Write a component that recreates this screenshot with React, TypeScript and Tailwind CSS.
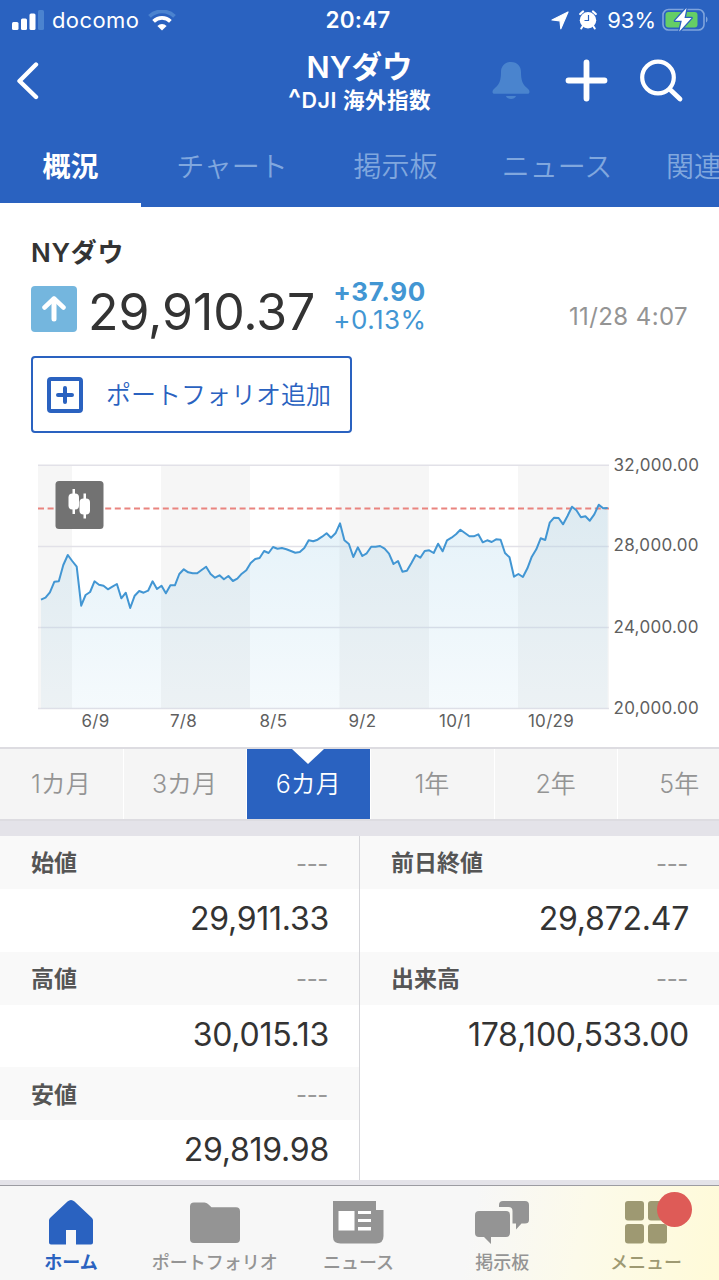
import clsx from "clsx";

// Closing levels, one per trading day, in thirds of a pixel from the top of the chart box.
const LEVELS = [
  449, 443, 427, 395, 394, 345, 315, 333, 350, 467, 435, 426, 394, 404, 407, 418, 410, 402, 445, 428,
  474, 437, 423, 428, 422, 394, 417, 407, 430, 406, 406, 372, 358, 367, 370, 370, 360, 350, 372, 383,
  376, 388, 378, 393, 386, 371, 361, 339, 327, 324, 303, 309, 291, 296, 294, 298, 303, 308, 306, 294,
  271, 274, 269, 260, 250, 263, 250, 220, 271, 282, 321, 292, 318, 310, 290, 290, 288, 296, 311, 342,
  333, 365, 362, 340, 315, 323, 303, 301, 309, 281, 304, 271, 263, 253, 239, 249, 259, 259, 253, 277,
  271, 276, 268, 269, 309, 322, 380, 372, 381, 355, 320, 298, 265, 270, 218, 203, 204, 223, 198, 170,
  181, 202, 199, 212, 193, 164, 175, 174,
];

const START_X = 41;
const STEP = 4.462;
const line = LEVELS.map((y, i) => `${(START_X + i * STEP).toFixed(1)},${(y / 3).toFixed(1)}`).join(" ");
const endX = START_X + (LEVELS.length - 1) * STEP;

const BANDS = [
  { x: 38, w: 34 },
  { x: 161, w: 89 },
  { x: 339.5, w: 89.5 },
  { x: 518, w: 91 },
];

const X_LABELS = [
  { text: "6/9", x: 95.5 },
  { text: "7/8", x: 183.5 },
  { text: "8/5", x: 273.5 },
  { text: "9/2", x: 362.5 },
  { text: "10/1", x: 455 },
  { text: "10/29", x: 551 },
];

const Y_LABELS = [
  { text: "32,000.00", y: 20.5 },
  { text: "28,000.00", y: 101 },
  { text: "24,000.00", y: 182.5 },
  { text: "20,000.00", y: 264 },
];

const TABS = [
  { label: "概況", width: "w-[141px]", active: true },
  { label: "チャート", width: "w-[182px]" },
  { label: "掲示板", width: "w-[145px]" },
  { label: "ニュース", width: "w-[178px]" },
  { label: "関連", width: "w-[96px]" },
];

const RANGES = ["1カ月", "3カ月", "6カ月", "1年", "2年", "5年"];

const LEFT_STATS = [
  { label: "始値", value: "29,911.33" },
  { label: "高値", value: "30,015.13" },
  { label: "安値", value: "29,819.98" },
];

const RIGHT_STATS = [
  { label: "前日終値", value: "29,872.47" },
  { label: "出来高", value: "178,100,533.00" },
];

function StatusBar() {
  return (
    <div className="grid h-10 grid-cols-3 items-center pl-3 pr-[11px]">
      <div className="flex items-center">
        <svg width="32" height="20" viewBox="0 0 32 20" fill="#fff">
          <rect x="0" y="12" width="6.5" height="8" rx="1.5" />
          <rect x="9" y="8.5" width="6" height="11.5" rx="1.5" />
          <rect x="17.5" y="3.5" width="6" height="16.5" rx="1.5" />
          <rect x="26" y="0" width="6" height="20" rx="1.5" fill="#4b83cf" />
        </svg>
        <span className="ml-2 text-[22px] tracking-[0.4px]">docomo</span>
        <svg className="ml-[9px]" width="28" height="21" viewBox="0 0 28 21" fill="none">
          <path d="M1.5 6.4a18 18 0 0 1 25 0" stroke="#4b83cf" strokeWidth="3.8" />
          <path d="M5.6 11.4a12 12 0 0 1 16.8 0" stroke="#fff" strokeWidth="3.8" />
          <path d="M14 20.6l-4.6-4.7a6.6 6.6 0 0 1 9.2 0z" fill="#fff" />
        </svg>
      </div>
      <div className="pr-1 text-center text-[22.5px] font-semibold tracking-[0.2px]">20:47</div>
      <div className="flex items-center justify-end">
        <svg width="18" height="19" viewBox="0 0 18 19" fill="#fff" stroke="#fff" strokeWidth="1.2" strokeLinejoin="round">
          <path d="M17 1L9.800 17.800 9 9.800 1 9z" />
        </svg>
        <svg className="ml-2.5" width="18" height="20" viewBox="0 0 18 20">
          <circle cx="9" cy="10.200" r="8.200" fill="#fff" />
          <path d="M1.200 4L4 1.500M16.800 4L14 1.500" stroke="#fff" strokeWidth="2.200" strokeLinecap="round" />
          <path d="M3.500 16.500L2.200 18.500M14.500 16.500l1.300 2" stroke="#fff" strokeWidth="2" strokeLinecap="round" />
          <path d="M9.500 5V10.500H5.500" fill="none" stroke="#2a62c0" strokeWidth="1.200" />
        </svg>
        <span className="ml-[10px] text-[22px]">93%</span>
        <svg className="ml-1.5" width="46" height="24" viewBox="0 0 46 24">
          <rect x="1" y="1.500" width="41" height="20.500" rx="5.500" fill="none" stroke="#7fa4dc" strokeWidth="1.600" />
          <path d="M44 8.500c2 .8 2 5.200 0 6z" fill="#7fa4dc" />
          <rect x="3.500" y="4" width="32" height="15.500" rx="3" fill="#65ce66" />
          <path
            d="M24.500 0L13 12.800h6.800L17.300 23.500 29.500 10h-7z"
            fill="#fff"
            stroke="#2a62c0"
            strokeWidth="2.600"
            strokeLinejoin="round"
            paintOrder="stroke"
          />
        </svg>
      </div>
    </div>
  );
}

function Header() {
  return (
    <header className="flex h-[207px] flex-col bg-[#2a62c0] text-white">
      <StatusBar />
      <div className="grid h-[84px] grid-cols-[1fr_auto_1fr] pt-1.5">
        <svg className="ml-[17px] mt-[16px]" width="22" height="38" viewBox="0 0 22 38" fill="none">
          <path d="M19 2.500L2.500 19 19 35" stroke="#fff" strokeWidth="4.400" strokeLinecap="round" strokeLinejoin="round" />
        </svg>
        <div className="text-center font-semibold">
          <div className="text-[30.5px] leading-[41px]">NYダウ</div>
          <div className="text-[21.500px] leading-[27px] tracking-[0.5px]">
            <span className="text-[27px] leading-[20px]">^</span>DJI 海外指数
          </div>
        </div>
        <div className="flex items-start justify-end pr-[35px]">
          <svg className="mt-[15px]" width="38" height="40" viewBox="0 0 38 40" fill="#4a84ce">
            <path d="M19 1C12.500 1 9 5.500 9 11c0 8-1.500 12-5.500 15.500C1.500 28.200.5 29 .5 31c0 1.300 1 1.800 2.500 1.800h32c1.500 0 2.500-.5 2.500-1.800 0-2-1-2.800-3-4.500C30.500 23 29 19 29 11 29 5.500 25.500 1 19 1z" />
            <path d="M14 35h10c-1.200 4-8.800 4-10 0z" />
          </svg>
          <svg className="ml-[34px] mt-[13px]" width="44" height="44" viewBox="0 0 44 44">
            <path d="M22.500 3.500v36M4.500 21.500h36" stroke="#fff" strokeWidth="5.800" strokeLinecap="round" />
          </svg>
          <svg className="ml-[31px] mt-[13px]" width="45" height="44" viewBox="0 0 45 44" fill="none">
            <circle cx="19" cy="18.500" r="15.800" stroke="#fff" strokeWidth="4.200" />
            <path d="M31 30.500L41 40" stroke="#fff" strokeWidth="4.800" strokeLinecap="round" />
          </svg>
        </div>
      </div>
      <nav className="flex h-[83px] overflow-hidden text-[28px]">
        {TABS.map((t) => (
          <div
            key={t.label}
            className={clsx(
              "shrink-0 whitespace-nowrap border-b-4 pt-[21px] text-center leading-[44px]",
              t.width,
              t.active ? "border-white font-bold" : "border-transparent font-[350] text-[#80a7de]"
            )}
          >
            {t.label}
          </div>
        ))}
      </nav>
    </header>
  );
}

function Quote() {
  return (
    <section className="h-[243px] px-[31px] pt-7">
      <h1 className="text-[26px] font-semibold leading-9 tracking-[0.7px]">NYダウ</h1>
      <div className="mt-[7px] flex h-14 items-start">
        <div className="mt-2 flex h-[46px] w-[46px] items-center justify-center rounded bg-[#74b6de]">
          <svg width="24" height="28" viewBox="0 0 24 28" fill="none" stroke="#fff" strokeLinecap="round" strokeLinejoin="round">
            <path d="M12 4v20" strokeWidth="5" />
            <path d="M2.500 12.500L12 3.500l9.500 9" strokeWidth="4.500" />
          </svg>
        </div>
        <div className="ml-[11px] mt-[5px] text-[50px] leading-[58px] tracking-[-0.1px]">29,910.37</div>
        <div className="ml-[18px] text-[#4296d3]">
          <div className="text-[26px] font-bold leading-7 tracking-[0.6px]">+37.90</div>
          <div className="text-[26px] leading-7 tracking-[0.500px]">+0.13%</div>
        </div>
        <div className="ml-auto mt-[23px] text-[24px] leading-8 tracking-[0.4px] text-[#949494]">11/28 4:07</div>
      </div>
      <button className="mt-[22px] flex h-[77px] w-[321px] items-center rounded border-2 border-[#2a62c0] pl-[14px] text-[#2a62c0]">
        <svg width="36" height="36" viewBox="0 0 36 36" fill="none" stroke="#2a62c0">
          <rect x="2" y="2" width="32" height="32" rx="2" strokeWidth="4" />
          <path d="M18 11v14M11 18h14" strokeWidth="4" strokeLinecap="round" />
        </svg>
        <span className="ml-[23px] pt-0.5 text-[25px] font-[350]">ポートフォリオ追加</span>
      </button>
    </section>
  );
}

function Chart() {
  return (
    <svg width="719" height="297" viewBox="0 0 719 297" className="block">
      <defs>
        <linearGradient id="area" gradientUnits="userSpaceOnUse" x1="0" y1="50" x2="0" y2="258">
          <stop offset="0" stopColor="#6ab5dc" stopOpacity="0.18" />
          <stop offset="1" stopColor="#6ab5dc" stopOpacity="0.07" />
        </linearGradient>
      </defs>
      {BANDS.map((b) => (
        <rect key={b.x} x={b.x} y="15" width={b.w} height="243.500" fill="#f6f6f6" />
      ))}
      {[15.3, 96.5, 177.6, 258.5].map((y) => (
        <path key={y} d={`M38 ${y}H609`} stroke="#e2e1e8" strokeWidth="1.500" />
      ))}
      <polygon points={`${START_X},258.500 ${line} ${endX},258.500`} fill="url(#area)" />
      <path d="M38 58.500H609" stroke="#e9847f" strokeWidth="1.800" strokeDasharray="6 3.600" />
      <polyline points={line} fill="none" stroke="#4296d3" strokeWidth="2" strokeLinejoin="round" />
      <rect x="55.500" y="31" width="48" height="48" rx="3.500" fill="#727272" />
      <g fill="#fff">
        <rect x="72.500" y="39" width="2.500" height="25" />
        <rect x="68.500" y="43.500" width="10.500" height="16" rx="4" />
        <rect x="83.500" y="43.500" width="2.500" height="25" />
        <rect x="79.500" y="48.500" width="10.500" height="16" rx="4" />
      </g>
      <g fill="#5f5f5f" className="text-[17px]">
        {Y_LABELS.map((l) => (
          <text key={l.text} x="613.500" y={l.y} className="tracking-[0.3px]">
            {l.text}
          </text>
        ))}
        {X_LABELS.map((l) => (
          <text key={l.text} x={l.x} y="276.500" textAnchor="middle" className="tracking-[0.3px]">
            {l.text}
          </text>
        ))}
      </g>
    </svg>
  );
}

function RangePicker() {
  return (
    <div className="h-[89px] bg-[#e4e3e9]">
      <div className="flex h-[74px] overflow-hidden border-y-2 border-[#dddce1] bg-[#f5f5f5] text-[25px] font-[350] text-[#949494]">
        {RANGES.map((r) => {
          const active = r === "6カ月";
          return (
            <div
              key={r}
              className={clsx(
                "relative flex w-[123.700px] shrink-0 items-center justify-center border-r border-white",
                active && "bg-[#2a62c0] text-white"
              )}
            >
              {active && (
                <svg className="absolute top-0 left-[45px]" width="32" height="16" viewBox="0 0 32 16">
                  <path d="M0 0h32L16 15z" fill="#fff" />
                </svg>
              )}
              <span className="pr-px pt-px">{r}</span>
            </div>
          );
        })}
      </div>
    </div>
  );
}

function Stat({ label, value }: { label: string; value: string }) {
  return (
    <div className="h-[115.700px]">
      <div className="flex h-[53px] items-center justify-between bg-[#f9f9f9] pl-[31px] pr-[31px] pt-0.5">
        <span className="text-[23px] font-bold text-[#555]">{label}</span>
        <span className="text-[24px] tracking-[-0.4px] text-[#999]">---</span>
      </div>
      <div className="pr-[30px] pt-[7px] text-right text-[32px] leading-[46px] tracking-[-0.25px]">{value}</div>
    </div>
  );
}

function Stats() {
  return (
    <section className="flex h-[344px] overflow-hidden">
      <div className="w-[360px] border-r border-[#d6d6da]">
        {LEFT_STATS.map((s) => (
          <Stat key={s.label} {...s} />
        ))}
      </div>
      <div className="flex-1">
        {RIGHT_STATS.map((s) => (
          <Stat key={s.label} {...s} />
        ))}
      </div>
    </section>
  );
}

function HomeIcon() {
  return (
    <svg width="54" height="45" viewBox="0 0 54 45" fill="#2a62c0">
      <path d="M23.500 1.500q3.500-3 7 0L48 18q1 1 1 2.500V42.500q0 2-2 2H32V30H22v14.500H7q-2 0-2-2V20.500Q5 19 6 18z" />
    </svg>
  );
}

function FolderIcon() {
  return (
    <svg width="54" height="45" viewBox="0 0 54 45" fill="#949494">
      <path d="M6 2.500h10.500q2 0 3.500 1.500l3.500 3.300H48q4 0 4 4V39q0 4-4 4H6q-4 0-4-4V6.500q0-4 4-4z" />
    </svg>
  );
}

function NewsIcon() {
  return (
    <svg width="54" height="45" viewBox="0 0 54 45">
      <path d="M1 1h43v9h7.500v26q0 7.500-7.500 7.500H8.500Q1 43.500 1 37z" fill="#949494" />
      <path d="M6.500 11h16v19.500h-16zM26 11h13v3H26zM26 19h13v3H26zM26 27h13v3.500H26z" fill="#fff" />
    </svg>
  );
}

function BoardIcon() {
  return (
    <svg width="54" height="45" viewBox="0 0 54 45" fill="#949494">
      <path d="M28 1h22q4 0 4 4v15q0 3.500-4 3.500h-3.500L41 29.500v-6h-3.500V11q0-4-4-4H24V5q0-4 4-4z" />
      <path d="M4 11h27q4 0 4 4v18q0 4-4 4H16v7l-7-7H4q-4 0-4-4V15q0-4 4-4z" />
    </svg>
  );
}

function MenuIcon() {
  return (
    <svg width="54" height="45" viewBox="0 0 54 45" fill="#9e9972">
      <rect x="6" y="1" width="19" height="19.500" rx="3" />
      <rect x="29" y="1" width="19" height="19.500" rx="3" />
      <rect x="6" y="24" width="19" height="19.500" rx="3" />
      <rect x="29" y="24" width="19" height="19.500" rx="3" />
    </svg>
  );
}

const NAV = [
  { label: "ホーム", Icon: HomeIcon, color: "font-bold text-[#2a62c0]" },
  { label: "ポートフォリオ", Icon: FolderIcon, color: "font-medium text-[#949494]" },
  { label: "ニュース", Icon: NewsIcon, color: "font-medium text-[#949494]" },
  { label: "掲示板", Icon: BoardIcon, color: "font-medium text-[#949494]" },
  { label: "メニュー", Icon: MenuIcon, color: "font-medium text-[#9e9972]", badge: true },
];

function BottomNav() {
  return (
    <footer className="border-t-[5px] border-[#e4e3e9]">
      <nav className="flex h-[95px] justify-between border-t border-[#9c9ca2] bg-[linear-gradient(100deg,#f7f7f7_65%,#fcfaea_80%,#fffad8_100%)] pr-0.5">
        {NAV.map(({ label, Icon, color, badge }) => (
          <div key={label} className="relative flex w-[142px] shrink-0 flex-col items-center pt-[14px]">
            <Icon />
            {badge && <span className="absolute left-[82px] top-[6px] h-[35px] w-[35px] rounded-full bg-[#de5b57]" />}
            <span className={clsx("mt-0.5 whitespace-nowrap text-[18px] leading-8", color)}>{label}</span>
          </div>
        ))}
      </nav>
    </footer>
  );
}

export default function App() {
  return (
    <div className="h-[1280px] w-[719px] overflow-hidden bg-white font-['Inter','Noto_Sans_CJK_JP',sans-serif] text-[#333]">
      <Header />
      <Quote />
      <Chart />
      <RangePicker />
      <Stats />
      <BottomNav />
    </div>
  );
}
